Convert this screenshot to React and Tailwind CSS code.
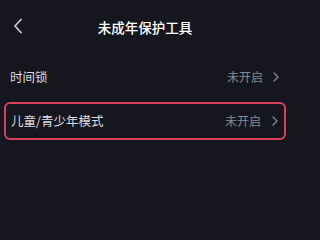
export default function App() {
  const font = { fontFamily: '"Noto Sans CJK SC", "Noto Sans", sans-serif' };
  const Chevron = () => (
    <svg width="6" height="10" viewBox="0 0 6 10">
      <path d="M1 1l4 4-4 4" fill="none" stroke="currentColor" strokeWidth="1.3" strokeLinecap="round" strokeLinejoin="round" />
    </svg>
  );
  return (
    <div className="w-screen min-w-[290px] h-screen min-h-[208px] bg-[#16161e] overflow-hidden" style={font}>
      <div className="w-[290px]">
        <div className="relative h-[54px] flex items-center justify-center">
          <svg width="10" height="16" viewBox="0 0 10 16" className="absolute left-[13px] top-[18px] text-[#c8c8cc]">
            <path d="M8 1.5L2 8l6 6.5" fill="none" stroke="currentColor" strokeWidth="1.8" strokeLinecap="round" strokeLinejoin="round" />
          </svg>
          <span className="text-[13.5px] font-medium text-white leading-none mt-[1px]">未成年保护工具</span>
        </div>
        <div className="flex items-center justify-between h-[46px] pl-[10px] pr-[11px]">
          <span className="text-[12.5px] text-[#dcdce0] leading-none">时间锁</span>
          <div className="flex items-center gap-[10px] text-[#8a8a90]">
            <span className="text-[12px] leading-none">未开启</span>
            <Chevron />
          </div>
        </div>
        <div className="mx-[4px] mt-[2px] h-[38px] border-2 border-[#d9405c] rounded-[6px] flex items-center justify-between pl-[5px] pr-[6px]">
          <span className="text-[12.5px] text-[#dcdce0] leading-none">儿童/青少年模式</span>
          <div className="flex items-center gap-[11px] text-[#8a8a90]">
            <span className="text-[12px] leading-none">未开启</span>
            <Chevron />
          </div>
        </div>
      </div>
    </div>
  );
}
